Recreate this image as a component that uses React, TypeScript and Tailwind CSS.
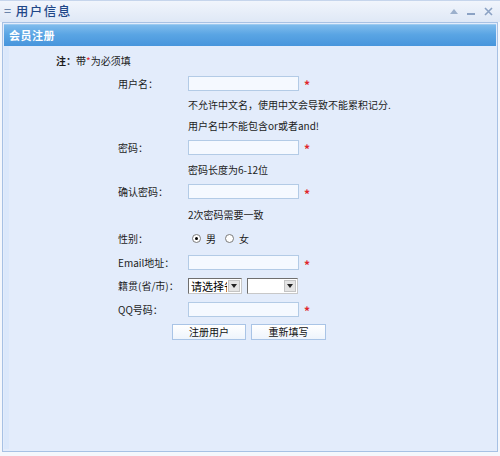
import React from "react";

const cjk = { fontFamily: '"Noto Sans CJK SC", "Noto Sans", sans-serif' };

function Star() {
  return (
    <span className="ml-[5px] translate-y-[2px] text-[12px] font-bold leading-none text-[#e0262b]">
      *
    </span>
  );
}

function TextBox() {
  return (
    <div className="h-[15px] w-[111px] border border-[#b3cbe6] bg-[#f5f9ff]" />
  );
}

function Select({ label, width }: { label: string; width: string }) {
  return (
    <div
      className={`flex h-[16px] ${width} items-stretch border border-[#6f6f6f] border-r-[#c8c8c8] border-b-[#c8c8c8] bg-white`}
    >
      <div className="min-w-0 flex-1 overflow-hidden whitespace-nowrap pl-[2px] text-[11px] leading-[14px] text-black">
        {label}
      </div>
      <div className="m-[1px] flex w-[12px] items-center justify-center border border-[#c4c4c4] bg-[#e4e4e4]">
        <svg width="6" height="4" viewBox="0 0 6 4">
          <path d="M0 0h6L3 4z" fill="#222" />
        </svg>
      </div>
    </div>
  );
}

function Radio({ checked }: { checked?: boolean }) {
  return (
    <span className="flex h-[9px] w-[9px] items-center justify-center rounded-full border border-[#7b7b7b] bg-white">
      {checked && <span className="h-[3px] w-[3px] rounded-full bg-black" />}
    </span>
  );
}

function Row({
  h,
  label,
  children,
}: {
  h: string;
  label?: string;
  children?: React.ReactNode;
}) {
  return (
    <div className={`flex ${h} items-center`}>
      <div className="box-content w-[70px] whitespace-nowrap pl-[109px]">{label}</div>
      <div className="flex items-center">{children}</div>
    </div>
  );
}

export default function App() {
  return (
    <div className="h-[456px] w-[500px] overflow-hidden bg-[#f4f7fc]" style={cjk}>
      {/* title bar */}
      <div className="flex h-[22px] items-center justify-between border-t border-[#c6d5ec] bg-[linear-gradient(180deg,#f1f5fc_0%,#dfe8f6_100%)] px-[4px]">
        <div className="text-[12.5px] font-medium tracking-[1.5px] text-[#1f4788]">
          <span className="mr-[3px] text-[#6a84aa]">=</span>用户信息
        </div>
        <div className="flex items-center gap-[9px] pr-[3px]">
          <svg width="8" height="5" viewBox="0 0 8 5">
            <path d="M0 5L4 0L8 5z" fill="#9cb0cc" />
          </svg>
          <svg width="8" height="6" viewBox="0 0 8 6">
            <path d="M0 4h8v2H0z" fill="#8ba2c4" />
          </svg>
          <svg width="9" height="9" viewBox="0 0 9 9">
            <path d="M1 1L8 8M8 1L1 8" stroke="#8ba2c4" strokeWidth="1.6" />
          </svg>
        </div>
      </div>

      {/* panel */}
      <div className="mx-[2px] h-[430px] border border-[#a7c1e4] bg-[#e3ecfb] p-[1px]">
        <div className="flex h-[22px] items-center border-t border-[#9ccaf0] bg-[linear-gradient(180deg,#7fbbec_0%,#5aa5e4_45%,#4795dc_100%)] pl-[5px] text-[11px] font-bold tracking-[0.5px] text-white">
          会员注册
        </div>
        <div className="h-[403px] border-l-[5px] border-[#dbe8fb] pt-[3px] text-[10px] text-[#1c1c1c]">
          <div className="flex h-[23px] items-center pl-[47px]">
            <span className="font-bold">注：</span>带<span className="text-[#e0262b]">*</span>为必须填
          </div>
          <Row h="h-[22px]" label="用户名：">
            <TextBox />
            <Star />
          </Row>
          <Row h="h-[20px]">不允许中文名，使用中文会导致不能累积记分.</Row>
          <Row h="h-[22px]">用户名中不能包含or或者and!</Row>
          <Row h="h-[22px]" label="密码：">
            <TextBox />
            <Star />
          </Row>
          <Row h="h-[22.5px]">密码长度为6-12位</Row>
          <Row h="h-[22.5px]" label="确认密码：">
            <TextBox />
            <Star />
          </Row>
          <Row h="h-[23.5px]">2次密码需要一致</Row>
          <Row h="h-[24.5px]" label="性别：">
            <div className="flex items-center pl-[4px]">
              <Radio checked />
              <span className="ml-[5px] mr-[9px]">男</span>
              <Radio />
              <span className="ml-[5px]">女</span>
            </div>
          </Row>
          <Row h="h-[23px]" label="Email地址：">
            <TextBox />
            <Star />
          </Row>
          <Row h="h-[23px]" label="籍贯(省/市)：">
            <Select label="请选择省份" width="w-[54px]" />
            <div className="w-[5px]" />
            <Select label="" width="w-[51px]" />
          </Row>
          <Row h="h-[24px]" label="QQ号码：">
            <TextBox />
            <Star />
          </Row>
          <div className="flex h-[22px] items-center gap-[5px] pl-[163px]">
            <button className="h-[16px] w-[74px] border border-[#a9c4e6] bg-[linear-gradient(180deg,#ffffff_0%,#eef4fc_100%)] text-[10px] leading-[14px] text-[#111]">
              注册用户
            </button>
            <button className="h-[16px] w-[75px] border border-[#a9c4e6] bg-[linear-gradient(180deg,#ffffff_0%,#eef4fc_100%)] text-[10px] leading-[14px] text-[#111]">
              重新填写
            </button>
          </div>
        </div>
      </div>
    </div>
  );
}
